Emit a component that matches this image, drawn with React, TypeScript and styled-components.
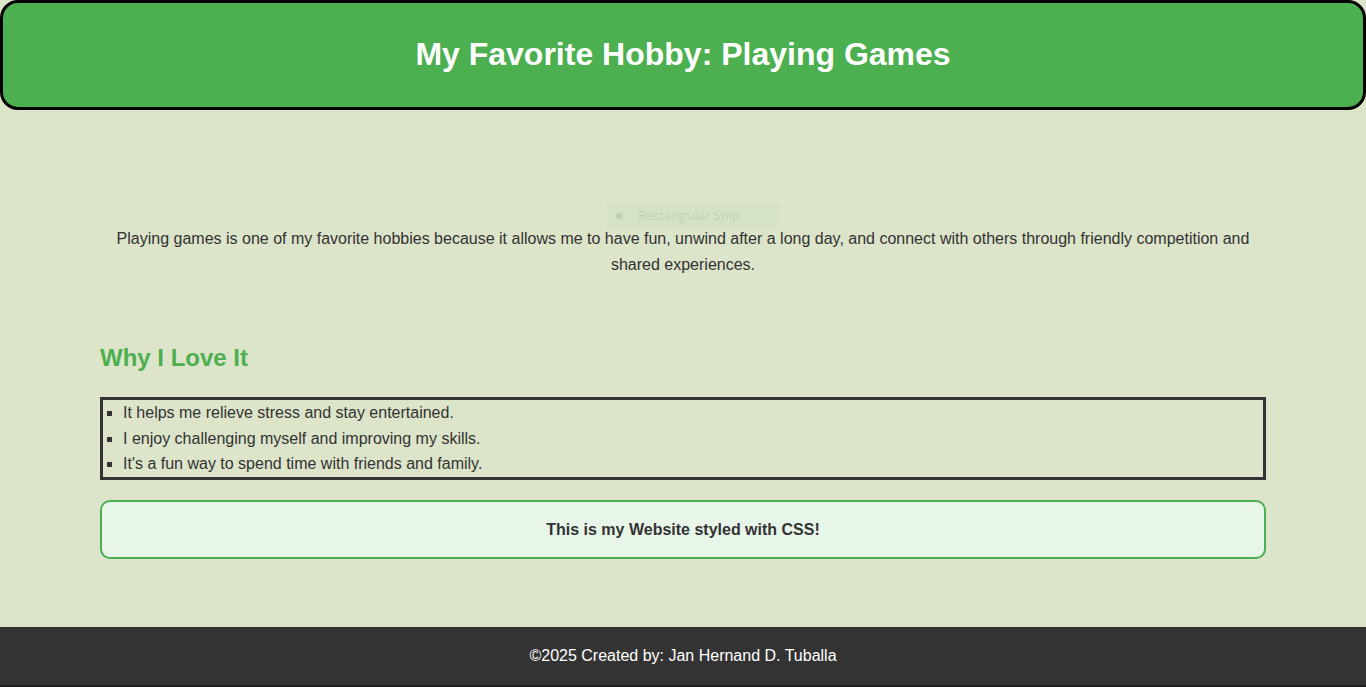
import React from "react";
import styled, { createGlobalStyle } from "styled-components";

const GlobalStyle = createGlobalStyle`
  html, body {
    margin: 0;
    padding: 0;
    background: #dce4c9;
    font-family: "Liberation Sans", Arial, sans-serif;
    color: #333;
    line-height: 1.6;
  }
  * { box-sizing: border-box; }
`;

const Page = styled.div`
  min-height: 687px;
  display: flex;
  flex-direction: column;
  position: relative;
`;

const Header = styled.header`
  background: #4caf50;
  border: 3px solid #000;
  border-radius: 18px;
  height: 110px;
  padding-bottom: 2px;
  display: flex;
  align-items: center;
  justify-content: center;
`;

const Title = styled.h1`
  margin: 0;
  color: #fff;
  font-size: 32px;
  font-weight: bold;
  line-height: 1.2;
`;

const Main = styled.main`
  flex: 1;
  padding: 116px 100px 68px;
  display: flex;
  flex-direction: column;
`;

const Intro = styled.p`
  margin: 0 0 61px;
  text-align: center;
  font-size: 16px;
  line-height: 26px;
  padding: 0 10px;
`;

const Heading = styled.h2`
  margin: 0 0 20px;
  color: #4caf50;
  font-size: 24px;
  line-height: 38px;
  font-weight: bold;
`;

const List = styled.ul`
  margin: 0;
  padding: 0 0 0 20px;
  border: 3px solid #333;
  list-style: square;
  font-size: 16px;
  line-height: 25.5px;
`;

const Item = styled.li``;

const Note = styled.div`
  margin-top: 20px;
  border: 2px solid #4caf50;
  border-radius: 10px;
  background: #e8f5e9;
  padding: 15px 14px 14px;
  text-align: center;
  font-weight: bold;
  font-size: 16px;
  line-height: 26px;
`;

const Footer = styled.footer`
  background: #333;
  color: #fff;
  height: 60px;
  padding-top: 16px;
  text-align: center;
  font-size: 16px;
  line-height: 26px;
  border-bottom: 2px solid #1e1e1e;
`;

const SnipHint = styled.div`
  position: absolute;
  left: 607px;
  top: 203px;
  width: 172px;
  height: 25px;
  background: rgba(205, 225, 200, 0.45);
  display: flex;
  align-items: center;
  gap: 16px;
  padding-left: 9px;
  font-family: "Open Sans", "Liberation Sans", sans-serif;
  font-size: 13px;
  color: rgba(150, 170, 140, 0.35);
`;

const Dot = styled.span`
  width: 6px;
  height: 6px;
  border-radius: 50%;
  background: rgba(150, 170, 140, 0.35);
`;

export default function App() {
  return (
    <>
      <GlobalStyle />
      <Page>
        <Header>
          <Title>My Favorite Hobby: Playing Games</Title>
        </Header>
        <Main>
          <Intro>
            Playing games is one of my favorite hobbies because it allows me to have fun, unwind after a long day, and
            connect with others through friendly competition and shared experiences.
          </Intro>
          <Heading>Why I Love It</Heading>
          <List>
            <Item>It helps me relieve stress and stay entertained.</Item>
            <Item>I enjoy challenging myself and improving my skills.</Item>
            <Item>It's a fun way to spend time with friends and family.</Item>
          </List>
          <Note>This is my Website styled with CSS!</Note>
        </Main>
        <Footer>©2025 Created by: Jan Hernand D. Tuballa</Footer>
        <SnipHint>
          <Dot />
          Rectangular Snip
        </SnipHint>
      </Page>
    </>
  );
}
